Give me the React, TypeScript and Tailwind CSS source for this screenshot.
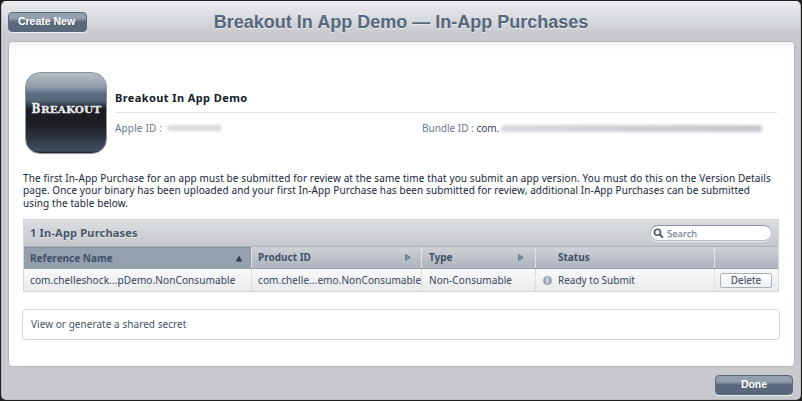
import React from "react";

function DarkButton({ children, className }: { children: React.ReactNode; className: string }) {
  return (
    <button
      className={`flex h-[20px] items-center justify-center rounded-[4px] border border-[#59687b] bg-linear-to-b from-[#929fac] from-30% to-[#5a687b] to-50% pb-px font-['Liberation_Sans',sans-serif] text-[10.5px] leading-none font-bold text-white shadow-[0_1px_0_#eceef1] ${className}`}
    >
      {children}
    </button>
  );
}

function AppIcon() {
  return (
    <div className="flex h-[82px] w-[82px] shrink-0 justify-center rounded-[15px] border border-[#8996a5] bg-[linear-gradient(180deg,#b9bec3_0%,#a0a9b3_10%,#8d9aa8_18%,#5d6d82_26%,#56677c_34%,#1c1d20_45%,#1c1d1f_64%,#2f3743_82%,#414e60_97%,#222_100%)] pt-[29px]">
      <svg width="74" height="14" viewBox="0 0 74 14">
        <g fill="#e9ecef" stroke="#e9ecef" strokeWidth=".3" fontFamily="DejaVu Serif, Liberation Serif, serif" fontWeight="700">
          <text x="2.5" y="11" fontSize="12.5" textLength="9" lengthAdjust="spacingAndGlyphs">B</text>
          <text x="12" y="11" fontSize="9.6" textLength="60" lengthAdjust="spacingAndGlyphs">REAKOUT</text>
        </g>
      </svg>
    </div>
  );
}

function SideArrow() {
  return (
    <svg width="6" height="7" viewBox="0 0 6 7">
      <path d="M.7 .7 5.3 3.5 .7 6.3Z" fill="#8c99a7" stroke="#59697c" strokeWidth=".9" />
    </svg>
  );
}

function SearchField() {
  return (
    <div className="flex h-[16px] w-[122px] items-center rounded-full border border-[#b4bac2] border-t-[#8490a0] bg-white pl-[2px] shadow-[0_1px_0_#eceef0]">
      <svg width="11" height="11" viewBox="0 0 11 11" fill="none" stroke="#46566b">
        <circle cx="4.5" cy="4.2" r="3" strokeWidth="1.6" />
        <path d="m6.7 6.4 3.2 3.2" strokeWidth="2" />
      </svg>
      <span className="ml-[3px] pt-px text-[9.5px] leading-none text-[#68778a]">Search</span>
    </div>
  );
}

const columns = "grid grid-cols-[227px_170px_114px_179px_64px]";

export default function App() {
  return (
    <div className="h-[401px] w-[802px] overflow-hidden bg-[#211e20] p-px font-['Noto_Sans',sans-serif] text-[10px] text-[#33445a]">
      <div className="flex h-[399px] w-[800px] flex-col rounded-[5px] border border-[#b8bac0] border-t-[#f0eff2] bg-[linear-gradient(180deg,#eceaee_0px,#d6dade_18px,#c8c9cd_32px,#c8c9cd_100%)] px-[6px]">
        <header className="grid h-[39px] shrink-0 grid-cols-[79px_1fr_79px] items-center">
          <DarkButton className="w-[79px] pr-[2px]">Create New</DarkButton>
          <h1 className="pt-px text-center font-['Liberation_Sans',sans-serif] text-[18px] leading-none font-bold whitespace-nowrap text-[#57677c] [text-shadow:0_1px_0_#e8ebee]">
            Breakout In App Demo — In-App Purchases
          </h1>
        </header>
        <main className="h-[326px] w-[787px] shrink-0 rounded-[4px] border border-[#b3b8c0] bg-linear-to-b from-[#f1f2f3] to-white to-[8px] px-[14px] pt-[30px]">
          <section className="flex gap-[8px] pl-[2px]">
            <AppIcon />
            <div className="w-[662px]">
              <h2 className="flex h-[41px] items-end border-b border-[#e3e3e6] pb-[8px] text-[11px] leading-[13px] font-bold tracking-[0.4px] text-[#121b29]">
                Breakout In App Demo
              </h2>
              <div className="flex h-[29px] items-center pt-px text-[#68778a]">
                <div className="flex w-[307px] items-center">
                  <span className="tracking-[0.15px]">Apple ID :</span>
                  <span className="ml-[5px] h-[6px] w-[55px] rounded-full bg-[#d6d9df] blur-[1.5px]" />
                </div>
                <span>Bundle ID : <span className="text-[#33445a]">com.</span></span>
                <span className="ml-[2px] h-[7px] w-[261px] rounded-full bg-linear-to-r from-[#d5d8de] to-[#c4c6cc] blur-[1.5px]" />
              </div>
            </div>
          </section>
          <p className="mt-[18px] text-[10px] leading-[12.4px] whitespace-nowrap text-[#17263b]">
            <span className="block tracking-[0.118px]">The first In-App Purchase for an app must be submitted for review at the same time that you submit an app version. You must do this on the Version Details</span>
            <span className="block tracking-[0.09px]">page. Once your binary has been uploaded and your first In-App Purchase has been submitted for review, additional In-App Purchases can be submitted</span>
            <span className="block tracking-[0.09px]">using the table below.</span>
          </p>
          <section className="mt-[10px] w-[756px] border border-[#d3d6db] whitespace-nowrap">
            <div className="flex h-[27px] items-center justify-between border-b border-[#adb3bb] bg-linear-to-b from-[#dcdfe2] to-[#c5c7cb] pr-[6px] pl-[6px] text-[11px] font-bold tracking-[0.2px] text-[#46566b] [text-shadow:0_1px_0_#e5e7ea]">
              <span>1 In-App Purchases</span>
              <div className="font-normal tracking-normal"><SearchField /></div>
            </div>
            <div className={`${columns} h-[22px] border-b border-[#98a2ae] bg-linear-to-b from-[#cfd2d6] to-[#aeb4bc] font-bold text-[#40516a]`}>
              <div className="flex items-center justify-between border-t border-[#858f9d] bg-[#94a0ad] pr-[8px] pl-[6px]">
                <span>Reference Name</span>
                <svg width="8" height="7" viewBox="0 0 8 7"><path d="M4 .5 7.2 6.5H.8Z" fill="#2b3b50" /></svg>
              </div>
              <div className="flex items-center justify-between border-l border-[#dfe1e4] pr-[10px] pl-[6px]"><span>Product ID</span><SideArrow /></div>
              <div className="flex items-center justify-between border-l border-[#dfe1e4] pr-[11px] pl-[7px]"><span>Type</span><SideArrow /></div>
              <div className="flex items-center border-l border-[#dfe1e4] pl-[22px]">Status</div>
              <div className="border-l border-[#dfe1e4]" />
            </div>
            <div className={`${columns} h-[22px] bg-linear-to-b from-[#fafafb] to-[#e9eaec]`}>
              <div className="flex items-center pl-[6px] tracking-[0.11px]">com.chelleshock...pDemo.NonConsumable</div>
              <div className="flex items-center border-l border-dotted border-[#c9cdd2] pl-[6px] tracking-[0.08px]">com.chelle...emo.NonConsumable</div>
              <div className="flex items-center border-l border-dotted border-[#c9cdd2] pl-[7px] tracking-[0.08px]">Non-Consumable</div>
              <div className="flex items-center border-l border-dotted border-[#c9cdd2] pl-[7px]">
                <span className="mr-[6px] h-[9px] w-[9px] rounded-full border border-[#8793a2] bg-linear-to-r from-[#929eab] via-[#cfd3d7] to-[#929eab]" />
                Ready to Submit
              </div>
              <div className="flex items-center border-l border-dotted border-[#c9cdd2] pl-[5px]">
                <button className="flex h-[15px] w-[52px] items-center justify-center rounded-[2px] border border-[#a7afb9] bg-linear-to-b from-white to-[#f0f1f3] leading-none">Delete</button>
              </div>
            </div>
          </section>
          <div className="mt-[17px] -ml-px flex h-[31px] w-[758px] items-center rounded-[4px] border border-[#d3d5d9] pl-[8px] tracking-[0.05px] text-[#46566b]">
            View or generate a shared secret
          </div>
        </main>
        <footer className="flex justify-end pt-[8px] pr-px">
          <DarkButton className="w-[78px]">Done</DarkButton>
        </footer>
      </div>
    </div>
  );
}
